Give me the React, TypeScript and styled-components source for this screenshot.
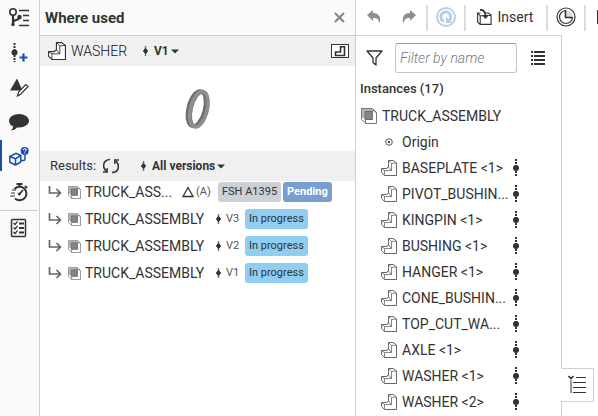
import React from "react";
import styled, { createGlobalStyle } from "styled-components";

const ink = "#333";
const line = "#cfcfcf";
const blue = "#1b4fae";

const GlobalStyle = createGlobalStyle`
  * { box-sizing: border-box; }
  html, body, #root { height: 100%; }
  body {
    margin: 0;
    overflow: hidden;
    background: #fff;
    color: ${ink};
    font: 14px/20px Roboto, "Open Sans", sans-serif;
  }
  button { font: inherit; color: inherit; background: none; border: 0; padding: 0; }
  svg { display: block; flex: none; }
  ul { list-style: none; margin: 0; padding: 0; }
`;

/* ---------- layout ---------- */

const Page = styled.div`
  display: flex;
  height: 100vh;
`;

const Rail = styled.nav`
  flex: none;
  width: 40px;
  background: #fafafa;
  border-right: 1px solid ${line};
`;

const RailButton = styled.button<{ $active?: boolean }>`
  display: flex;
  align-items: center;
  width: 38px;
  height: 35px;
  padding: 0 0 3px 7px;
  background: ${(p) => (p.$active ? `linear-gradient(${blue}, ${blue}) 0 0 / 2px 31px no-repeat` : "none")};
`;

const RailDivider = styled.div`
  width: 38px;
  height: 1px;
  background: ${line};
`;

const UsagePanel = styled.section`
  flex: none;
  width: 316px;
  border-right: 1px solid ${line};
`;

const PanelHeader = styled.header`
  display: flex;
  align-items: center;
  justify-content: space-between;
  height: 36px;
  padding: 0 10px 0 5px;
  background: #fafafa;
  border-bottom: 1px solid ${line};
`;

const PanelTitle = styled.h1`
  margin: 0;
  font-size: 15px;
  font-weight: 700;
`;

const Bar = styled.div`
  display: flex;
  align-items: center;
  height: 30px;
  padding: 0 6px 0 8px;
  background: #f0f0f0;
`;

const BarName = styled.span`
  width: 66px;
  margin-left: 5px;
  font-weight: 300;
  color: #111;
`;

const VersionMenu = styled.button`
  display: flex;
  align-items: center;
  gap: 2px;
  margin-left: 4px;
  font-size: 12px;
  font-weight: 700;
`;

const VersionText = styled.span`
  padding-left: 2px;
`;

const OpenButton = styled.button`
  margin-left: auto;
`;

const Preview = styled.div`
  display: flex;
  align-items: center;
  justify-content: center;
  height: 85px;
`;

const ResultsLabel = styled.span`
  width: 50px;
  margin: 0 3px 0 2px;
  font-size: 13px;
`;

const RefreshButton = styled.button`
  margin-right: 16px;
`;

const ResultRow = styled.li`
  display: flex;
  align-items: center;
  height: 27px;
  padding: 0 0 5px 8px;
`;

const ResultLink = styled.div`
  display: flex;
  flex: none;
  align-items: center;
  gap: 6px;
`;

const ResultName = styled.span<{ $short?: boolean }>`
  flex: none;
  width: ${(p) => (p.$short ? "91px" : "123px")};
  margin: 0 6px 0 4px;
  white-space: nowrap;
`;

const ResultVersion = styled.span<{ $wide?: boolean }>`
  width: ${(p) => (p.$wide ? "24px" : "22px")};
  padding-left: ${(p) => (p.$wide ? "2px" : "3px")};
  font-size: 11px;
  color: #555;
`;

const Tag = styled.span<{ $tone: "grey" | "blue" | "sky" }>`
  height: 20px;
  padding: 0 4px;
  border-radius: 3px;
  margin-right: 2px;
  font-size: 11px;
  line-height: 20px;
  white-space: nowrap;
  font-weight: ${(p) => (p.$tone === "blue" ? 700 : 400)};
  color: ${(p) => (p.$tone === "blue" ? "#fff" : ink)};
  background: ${(p) => ({ grey: "#cdd0d5", blue: "#789fce", sky: "#8fcdf1" })[p.$tone]};
`;

const Workspace = styled.main`
  display: flex;
  flex: 1;
  flex-direction: column;
  min-width: 0;
`;

const Toolbar = styled.div`
  display: flex;
  flex: none;
  align-items: center;
  height: 35px;
  overflow: hidden;
`;

const ToolButton = styled.button<{ $wide?: boolean }>`
  display: flex;
  flex: none;
  align-items: center;
  justify-content: center;
  gap: 6px;
  width: ${(p) => (p.$wide ? "80px" : "36px")};
  padding: ${(p) => (p.$wide ? "0 2px 2px 0" : "0 0 2px")};
  height: 34px;
`;

const HistoryButton = styled(ToolButton)`
  width: 35px;
`;

const ToolDivider = styled.div`
  flex: none;
  width: 2px;
  height: 26px;
  background: #dcdcdc;
`;

const Body = styled.div`
  display: flex;
  flex: 1;
  min-height: 0;
`;

const Tree = styled.section`
  flex: none;
  width: 205px;
  border-top: 1px solid ${line};
  overflow: hidden;
`;

const FilterRow = styled.div`
  display: flex;
  align-items: center;
  height: 44px;
  padding-left: 10px;
`;

const FilterInput = styled.input`
  width: 122px;
  height: 30px;
  margin: 0 14px 0 12px;
  padding: 0 4px;
  border: 1px solid #c4c4c4;
  border-top-color: #999;
  border-radius: 3px;
  font: italic 14px Roboto, sans-serif;
  color: ${ink};
  &::placeholder { color: #777; opacity: 1; font-weight: 300; }
`;

const TreeTitle = styled.h2`
  margin: 0;
  padding-left: 4px;
  height: 23px;
  line-height: 18px;
  font-size: 13px;
  font-weight: 500;
`;

const TreeRow = styled.li<{ $root?: boolean }>`
  display: flex;
  align-items: center;
  gap: 5px;
  height: 26px;
  padding-left: ${(p) => (p.$root ? "5px" : "25px")};
`;

const TreeName = styled.span`
  flex: none;
  width: 105px;
  white-space: nowrap;
`;

const Edge = styled.div`
  display: flex;
  flex-direction: column;
  width: 33px;
`;

const EdgeLine = styled.div<{ $grow?: boolean }>`
  flex: ${(p) => (p.$grow ? "1" : "0 0 14px")};
  border-left: 1px solid ${line};
`;

const EdgeTab = styled.button`
  display: flex;
  align-items: center;
  justify-content: center;
  height: 34px;
  border: 1px solid ${line};
  border-left: 0;
`;

/* ---------- icons ---------- */

const TreeIcon = () => (
  <svg width="24" height="24" fill="none" stroke={ink} strokeWidth="2">
    <circle cx="6" cy="8" r="3.2" strokeWidth="1.6" />
    <path d="M6 11V20M6 19C6 14.500 12.500 17.500 12.500 13" strokeWidth="2.2" />
    <circle cx="6" cy="20.500" r="1.700" fill={ink} stroke="none" />
    <circle cx="12.5" cy="13" r="2.200" fill={ink} stroke="none" />
    <path d="M12 6.500h10M16 11.500h6M16 16.500h6M12 21.500h10" strokeWidth="1.7" />
  </svg>
);

const AddVersionIcon = () => (
  <svg width="24" height="24">
    <path d="M7.500 4v19" stroke={ink} strokeWidth="2" strokeDasharray="2 1" />
    <circle cx="7.500" cy="13.500" r="3" fill={ink} />
    <path d="M12.500 18.500h8M16.500 14.500v8" stroke={blue} strokeWidth="2.2" />
  </svg>
);

const EditDeltaIcon = () => (
  <svg width="24" height="24">
    <path d="M10 4.500L3 16.500h12.500z" fill={ink} />
    <path d="M10.500 22l1.200-4 7-7.500 2.300 2-7 7.500z" fill="#fff" stroke={ink} strokeWidth="1.200" />
  </svg>
);

const CommentIcon = () => (
  <svg width="24" height="24">
    <path d="M12 5c5.500 0 10 3 10 6.800s-4.500 6.700-10 6.700l-2-.1c-1 1.600-3 2.800-6.500 2.900 2-.900 2.700-2.300 2.600-3.700C3.600 16.400 2 14.300 2 11.800 2 8 6.500 5 12 5z" fill={ink} />
  </svg>
);

const WhereUsedIcon = () => (
  <svg width="24" height="24" fill="none" stroke={blue} strokeWidth="1.500" strokeLinejoin="round">
    <path d="M2.800 12.500l6-3.200 5 2.200v6.500L8.500 21l-5.700-2.700zM2.800 12.500l5.700 2.300V21M8.500 14.800l5.300-3.300" />
    <path d="M14 16.500h2.500q1.500 0 1.500-1.500v-4" />
    <circle cx="17.700" cy="7" r="4" fill={blue} stroke="none" />
    <path d="M16.300 6.200q0-1.500 1.500-1.500T19.200 6q0 .7-1.400 1.500M17.700 8.500v1" stroke="#fff" strokeWidth="1" />
  </svg>
);

const StopwatchIcon = () => (
  <svg width="24" height="24" fill="none" stroke={ink} strokeWidth="2">
    <path d="M7.500 10a6.800 6.800 0 1 1 .5 9.500" />
    <path d="M9.500 5h6M12.500 5v3M18 7l2 2" />
    <path d="M12.500 15l3.500-4" strokeWidth="1.600" />
    <circle cx="12.300" cy="15" r="1" fill={ink} strokeWidth="1" />
    <path d="M5 11h4M4 14h4M3 17h5" strokeWidth="1.200" />
  </svg>
);

const ChecklistIcon = () => (
  <svg width="24" height="24" fill="none" stroke={ink} strokeWidth="1.500">
    <rect x="4.500" y="4.500" width="14" height="17" rx="1" />
    <path d="M12 8.500h5M12 13h5M12 17.500h5" strokeWidth="1.800" />
    <path d="M6.500 8l1.500 1.500 2.500-3M6.500 12.500l1.500 1.500 2.500-3M6.500 17l1.500 1.500 2.500-3" strokeWidth="1.200" />
  </svg>
);

const PartIcon = ({ size = 16, color = "#666" }: { size?: number; color?: string }) => (
  <svg width={size} height={size} viewBox="0 0 16 16" fill="#fff" stroke={color} strokeWidth="1" strokeLinejoin="round">
    <path d="M7.500.500H12L15.500 3v12.500h-12L.500 12.500v-4h5l2-1.500z" />
    <path d="M7.500.500L10.500 3.500V10.500H3.500L.500 8.500M10.500 3.500L15.500 3M3.500 10.500v5M5.500 8.500L7.500 7l3 3.500" fill="none" strokeWidth=".8" />
  </svg>
);

const AssemblyIcon = ({ size = 16 }: { size?: number }) => (
  <svg width={size} height={size} viewBox="0 0 16 16" fill="none" stroke="#777" strokeLinejoin="round">
    <path d="M.500.500h11l4 4v11H5l-4.500-4z" fill="#fff" />
    <path d="M1 1h10.500v10.500H4.500L1 9z" fill="#b5b5b5" stroke="none" />
    <path d="M4 3.500h7.500v8H4z" fill="#858585" stroke="#6c6c6c" />
    <path d="M4.500 12v3.500M11.500 11.500V2M12 2l3 2.500" />
  </svg>
);

const VersionIcon = () => (
  <svg width="9" height="12">
    <path d="M4.500 1v10" stroke="#777" strokeWidth="1.500" />
    <path d="M4.500 3.300L6.600 6 4.500 8.700 2.400 6z" fill={ink} stroke={ink} strokeLinejoin="round" />
  </svg>
);

const Caret = () => (
  <svg width="8" height="5"><path d="M0 .500h8L4 4.500z" fill={ink} /></svg>
);

const CloseIcon = () => (
  <svg width="11" height="11"><path d="M1 1l9 9M10 1l-9 9" stroke="#858585" strokeWidth="2" /></svg>
);

const OpenIcon = () => (
  <svg width="18" height="14" fill="none" stroke={ink}>
    <rect x=".5" y=".5" width="17" height="13" fill="#fff" />
    <path d="M9.500 2.800h4v8.700h-9v-3.500h5z" strokeWidth="1.600" />
  </svg>
);

const WasherDrawing = () => (
  <svg width="28" height="44" viewBox="0 0 28 44">
    <g transform="rotate(14 14 22)" fill="none">
      <ellipse cx="12.500" cy="22" rx="8.200" ry="18" stroke="#6a6a6a" strokeWidth="3.600" />
      <ellipse cx="14.800" cy="22" rx="8.200" ry="18" stroke="#8e8e8e" strokeWidth="4" />
      <ellipse cx="14.800" cy="22" rx="6.300" ry="16" stroke="#747474" strokeWidth=".7" />
    </g>
  </svg>
);

const RefreshIcon = () => (
  <svg width="16" height="16" fill="none" stroke={ink} strokeWidth="1.600">
    <path d="M7 1.500C-.500 2-1 9.500 3.500 13.200M9 14.500C16.500 14 17 6.500 12.500 2.800" />
    <path d="M0 14h4.200V10M16 2h-4.200V6" strokeWidth="1.400" />
  </svg>
);

const ChildArrow = () => (
  <svg width="14" height="12" fill="none" stroke="#666" strokeWidth="1.700">
    <path d="M1.500 0v7h11M8.500 3l4 4-4 4" />
  </svg>
);

const DeltaIcon = () => (
  <svg width="12" height="12"><path d="M6 1.500L11 10.500H1z" fill="none" stroke={ink} strokeWidth="1.300" /></svg>
);

const UndoIcon = ({ flip }: { flip?: boolean }) => (
  <svg width="14" height="14" viewBox="0 0 14 14">
    <path transform={flip ? "matrix(-1 0 0 1 14 0)" : undefined} d="M0 5L6 0v3c5 0 8 3 7 9l-1 1c0-4-2-5-6-5v3z" fill="#8e8e8e" />
  </svg>
);

const RegenerateIcon = () => (
  <svg width="20" height="20" fill="none" stroke="#b9cfe9">
    <circle cx="10" cy="10" r="9" strokeWidth="2" />
    <path d="M8 14.500a5 5 0 1 1 5-.8" strokeWidth="3" />
    <path d="M10 9.500v6.500h6z" fill="#b9cfe9" stroke="none" />
  </svg>
);

const InsertIcon = () => (
  <svg width="15" height="16" fill="none" stroke={ink} strokeWidth="1.100">
    <path d="M3.500 4H.600v9l2.500 2.400h11V6l-3-2H9M3.200 7v8.300M.600 4l2.600 2.800h3M11.500 6.500h2.600" />
    <path d="M3 .800c3 0 5 1.500 5.500 5" strokeWidth="1.800" />
    <path d="M5 6h7l-3.500 4z" fill={ink} stroke="none" />
  </svg>
);

const ClockIcon = () => (
  <svg width="20" height="20" fill="none" stroke={ink} strokeWidth="1.200">
    <circle cx="10" cy="10" r="9" />
    <path d="M9.500 3.500A6.500 6.500 0 1 0 16.500 10.500h-7z" fill="#fff" />
    <path d="M10 3a7 7 0 0 1 6.500 7H10" fill="#ddd" stroke="none" />
    <path d="M9.500 3v7.500H16.500" strokeWidth="1.500" />
  </svg>
);

const FunnelIcon = () => (
  <svg width="17" height="16" fill="none" stroke={ink} strokeWidth="1.300" strokeLinejoin="round">
    <path d="M1 1h15l-6 7v7l-3-2.500V8z" />
  </svg>
);

const ListIcon = () => (
  <svg width="14" height="14" stroke={ink} strokeWidth="2">
    <path d="M0 1h2M3 1h11M0 5h2M3 5h11M0 9h2M3 9h11M0 13h2M3 13h11" />
  </svg>
);

const OriginIcon = () => (
  <svg width="16" height="16" fill="none" stroke="#555">
    <circle cx="8" cy="8" r="3.300" />
    <circle cx="8" cy="8" r="1.300" fill="#555" stroke="none" />
  </svg>
);

const MateIcon = () => (
  <svg width="8" height="18">
    <path d="M4 0v18" stroke={ink} strokeWidth="2" strokeDasharray="2 1" />
    <circle cx="4" cy="9" r="3" fill={ink} />
  </svg>
);

const EdgeIcon = () => (
  <svg width="20" height="20" fill="none" stroke={ink} strokeWidth="1.200">
    <path d="M1.500 1l2.500 2.500L6.500 1" strokeWidth="1.700" />
    <path d="M4 5v13" stroke="#999" strokeWidth="2" />
    <path d="M9 2.500h10M6 7.500h13M6 12.500h13M6 17.500h13" />
  </svg>
);

const SketchIcon = () => (
  <svg width="14" height="16"><path d="M1 2h12v12H1z" fill="none" stroke={ink} strokeWidth="2" /></svg>
);

/* ---------- content ---------- */

const instances = [
  "BASEPLATE <1>",
  "PIVOT_BUSHIN...",
  "KINGPIN <1>",
  "BUSHING <1>",
  "HANGER <1>",
  "CONE_BUSHIN...",
  "TOP_CUT_WA...",
  "AXLE <1>",
  "WASHER <1>",
  "WASHER <2>",
];

export default function App() {
  return (
    <Page>
      <GlobalStyle />
      <Rail aria-label="Panels">
        <RailButton aria-label="Versions and history"><TreeIcon /></RailButton>
        <RailButton aria-label="Create version"><AddVersionIcon /></RailButton>
        <RailButton aria-label="Release"><EditDeltaIcon /></RailButton>
        <RailButton aria-label="Comments"><CommentIcon /></RailButton>
        <RailButton aria-label="Where used" $active><WhereUsedIcon /></RailButton>
        <RailButton aria-label="Performance"><StopwatchIcon /></RailButton>
        <RailDivider />
        <RailButton aria-label="Tasks"><ChecklistIcon /></RailButton>
      </Rail>

      <UsagePanel>
        <PanelHeader>
          <PanelTitle>Where used</PanelTitle>
          <button aria-label="Close"><CloseIcon /></button>
        </PanelHeader>
        <Bar>
          <PartIcon size={18} color={ink} />
          <BarName>WASHER</BarName>
          <VersionMenu><VersionIcon /><VersionText>V1</VersionText><Caret /></VersionMenu>
          <OpenButton aria-label="Open part"><OpenIcon /></OpenButton>
        </Bar>
        <Preview><WasherDrawing /></Preview>
        <Bar>
          <ResultsLabel>Results:</ResultsLabel>
          <RefreshButton aria-label="Refresh"><RefreshIcon /></RefreshButton>
          <VersionMenu><VersionIcon /><VersionText>All versions</VersionText><Caret /></VersionMenu>
        </Bar>
        <ul>
          <ResultRow>
            <ResultLink><ChildArrow /><AssemblyIcon size={13} /></ResultLink>
            <ResultName $short>TRUCK_ASS...</ResultName>
            <DeltaIcon />
            <ResultVersion $wide>(A)</ResultVersion>
            <Tag $tone="grey">FSH A1395</Tag>
            <Tag $tone="blue">Pending</Tag>
          </ResultRow>
          {["V3", "V2", "V1"].map((v) => (
            <ResultRow key={v}>
              <ResultLink><ChildArrow /><AssemblyIcon size={13} /></ResultLink>
              <ResultName>TRUCK_ASSEMBLY</ResultName>
              <VersionIcon />
              <ResultVersion>{v}</ResultVersion>
              <Tag $tone="sky">In progress</Tag>
            </ResultRow>
          ))}
        </ul>
      </UsagePanel>

      <Workspace>
        <Toolbar>
          <HistoryButton aria-label="Undo"><UndoIcon /></HistoryButton>
          <HistoryButton aria-label="Redo"><UndoIcon flip /></HistoryButton>
          <ToolDivider />
          <ToolButton aria-label="Regenerate"><RegenerateIcon /></ToolButton>
          <ToolDivider />
          <ToolButton $wide><InsertIcon />Insert</ToolButton>
          <ToolDivider />
          <ToolButton aria-label="History"><ClockIcon /></ToolButton>
          <ToolDivider />
          <ToolButton aria-label="Sketch"><SketchIcon /></ToolButton>
        </Toolbar>
        <Body>
          <Tree>
            <FilterRow>
              <FunnelIcon />
              <FilterInput aria-label="Filter by name" placeholder="Filter by name" />
              <button aria-label="List view"><ListIcon /></button>
            </FilterRow>
            <TreeTitle>Instances (17)</TreeTitle>
            <ul>
              <TreeRow $root><AssemblyIcon /><TreeName>TRUCK_ASSEMBLY</TreeName></TreeRow>
              <TreeRow><OriginIcon /><TreeName>Origin</TreeName></TreeRow>
              {instances.map((name) => (
                <TreeRow key={name}>
                  <PartIcon />
                  <TreeName>{name}</TreeName>
                  <MateIcon />
                </TreeRow>
              ))}
            </ul>
          </Tree>
          <Edge>
            <EdgeLine $grow />
            <EdgeTab aria-label="Expand panel"><EdgeIcon /></EdgeTab>
            <EdgeLine />
          </Edge>
        </Body>
      </Workspace>
    </Page>
  );
}
